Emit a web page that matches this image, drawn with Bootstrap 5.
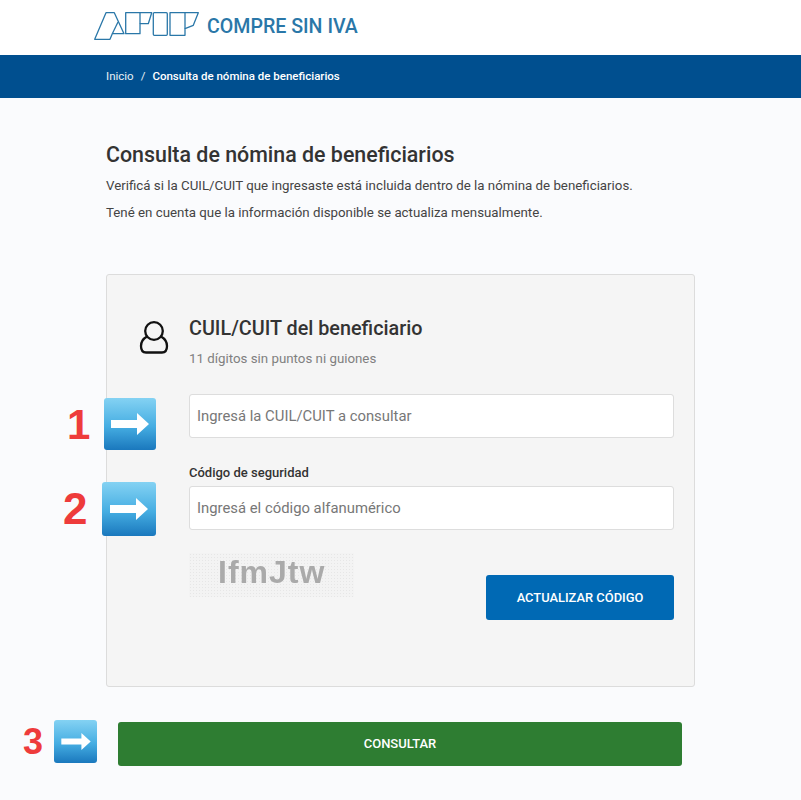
<!DOCTYPE html>
<html lang="es">
<head>
    <meta charset="utf-8">
    <meta name="viewport" content="width=device-width, initial-scale=1">
    <title>Consulta de nómina de beneficiarios</title>
    <link href="https://cdn.jsdelivr.net/npm/bootstrap@5.3.3/dist/css/bootstrap.min.css" rel="stylesheet">
    <style>
        body {
            background-color: #fafbfd;
            font-family: Roboto, "Liberation Sans", sans-serif;
            color: #333;
            height: 800px;
            overflow: hidden;
        }
        .top-head {
            height: 55px;
            background-color: #fff;
            padding-left: 94px;
        }
        .logo-svg { margin-top: -3px; }
        .head-title {
            color: #2a77a8;
            font-size: 19.6px;
            font-weight: 500;
            margin-left: 8px;
            margin-top: -1px;
        }
        .crumb-bar {
            height: 43px;
            background-color: #004f8f;
            padding-left: 106px;
            font-size: 11.5px;
            color: #e8eff5;
        }
        .crumb-bar .sep { margin: 0 7px; }
        .crumb-bar strong { font-weight: 500; color: #fff; }
        .page-body {
            position: relative;
            padding: 44px 106px 0 106px;
        }
        .page-title {
            font-size: 21.4px;
            font-weight: 500;
            line-height: 26px;
            margin: 0 0 8px 0;
            color: #333;
        }
        .page-text {
            font-size: 13.3px;
            line-height: 19px;
            margin: 0 0 8px 0;
            color: #444;
        }
        .form-box {
            margin-top: 52px;
            height: 413px;
            background-color: #f5f5f5;
            border: 1px solid #dcdcdc;
            border-radius: 3px;
            padding: 43px 20px 0 32px;
        }
        .user-ico { margin-top: 3px; }
        .box-head { margin-left: 20px; }
        .box-title {
            font-size: 19.8px;
            font-weight: 500;
            line-height: 22px;
            color: #333;
        }
        .box-sub {
            font-size: 13.3px;
            color: #808080;
            line-height: 16px;
            margin-top: 11px;
        }
        .field-wrap { padding-left: 50px; }
        .form-control.field-input {
            height: 44px;
            border: 1px solid #ddd;
            border-radius: 3px;
            font-size: 14.85px;
            padding-left: 7px;
            background-color: #fff;
        }
        .field-input::placeholder { color: #777; opacity: 1; }
        .first-input { margin-top: 27px; }
        .field-label {
            font-size: 13px;
            font-weight: 500;
            color: #333;
            line-height: 14px;
            margin: 28px 0 6px 0;
        }
        .captcha-img {
            width: 165px;
            height: 44px;
            margin-top: 23px;
            background-color: #f3f3f3;
            background-image: radial-gradient(#e6e6e6 0.7px, transparent 0.8px);
            background-size: 3px 3px;
            font-family: "Liberation Sans", sans-serif;
            font-weight: 700;
            font-size: 32px;
            letter-spacing: 1px;
            line-height: 38px;
            color: #aaa;
            padding-left: 29px;
            filter: blur(0.6px);
        }
        .btn.btn-refresh {
            width: 188px;
            height: 45px;
            margin-top: 45px;
            background-color: #0069b4;
            border: 0;
            border-radius: 3px;
            color: #fff;
            font-size: 12.9px;
            font-weight: 500;
        }
        .btn.btn-query {
            display: block;
            width: 564px;
            height: 44px;
            margin: 35px 0 0 12px;
            background-color: #2e7d32;
            border: 0;
            border-radius: 3px;
            color: #fff;
            font-size: 13px;
            font-weight: 500;
        }
        /* flechas y numeros pegados encima de la captura */
        .step-num {
            position: absolute;
            font-family: "Liberation Sans", sans-serif;
            font-weight: 700;
            color: #ee3b3b;
            font-size: 44px;
            line-height: 44px;
        }
        .step-arrow {
            position: absolute;
            background: linear-gradient(#84d2f3, #45ade2 55%, #1a78bd);
            border-radius: 3px;
            display: flex;
            align-items: center;
            justify-content: center;
        }
    </style>
</head>
<body>
    <header class="top-head d-flex align-items-center">
        <svg class="logo-svg" width="105" height="28" viewBox="0 0 105 28" fill="none" stroke="#2a77a8" stroke-width="1.3" stroke-linejoin="round">
            <path d="M0.700 27.300 L12 0.700 H20.300 L30 21.700 H18.300 L16 27.300 Z"/>
            <path d="M18.300 21.700 L24 10"/>
            <path d="M31.700 0.700 H57.700 L54.300 11.700 H46 V21.700 H31.700 Z"/>
            <path d="M46 0.700 V11.700"/>
            <rect x="59.300" y="0.700" width="14" height="22.600" rx="1"/>
            <path d="M76 0.700 H104.300 L99.300 13.300 L91 16.700 V23.300 H76 Z"/>
            <path d="M91 0.700 V16.700"/>
        </svg>
        <span class="head-title">COMPRE SIN IVA</span>
    </header>

    <nav class="crumb-bar d-flex align-items-center">
        <span>Inicio</span><span class="sep">/</span><strong>Consulta de nómina de beneficiarios</strong>
    </nav>

    <main class="page-body">
        <h1 class="page-title">Consulta de nómina de beneficiarios</h1>
        <p class="page-text">Verificá si la CUIL/CUIT que ingresaste está incluida dentro de la nómina de beneficiarios.</p>
        <p class="page-text">Tené en cuenta que la información disponible se actualiza mensualmente.</p>

        <div class="form-box">
            <div class="d-flex align-items-start">
                <svg class="user-ico" width="30" height="33" viewBox="0 0 30 33" fill="none" stroke="#111" stroke-width="2.3">
                    <circle cx="15" cy="10" r="8.800"/>
                    <path d="M8 15.500 C3.500 18 2 21 2 25 C2 29 4 31.500 7 31.500 H23 C26 31.500 28 29 28 25 C28 21 26.500 18 22 15.500"/>
                </svg>
                <div class="box-head">
                    <div class="box-title">CUIL/CUIT del beneficiario</div>
                    <div class="box-sub">11 dígitos sin puntos ni guiones</div>
                </div>
            </div>

            <div class="field-wrap">
                <input type="text" class="form-control field-input first-input" placeholder="Ingresá la CUIL/CUIT a consultar">
                <p class="field-label">Código de seguridad</p>
                <input type="text" class="form-control field-input" placeholder="Ingresá el código alfanumérico">
                <div class="d-flex justify-content-between align-items-start">
                    <div class="captcha-img">IfmJtw</div>
                    <button type="button" class="btn btn-refresh">ACTUALIZAR CÓDIGO</button>
                </div>
            </div>
        </div>

        <button type="button" class="btn btn-query">CONSULTAR</button>
    </main>

    <span class="step-num" style="left:67px;top:404px;font-size:42px;line-height:42px">1</span>
    <div class="step-arrow" style="left:104px;top:398px;width:52px;height:52px">
        <svg width="38" height="22" viewBox="0 0 38 22" fill="#fff"><path d="M0 7 H26 V0 L38 11 L26 22 V15 H0 Z"/></svg>
    </div>
    <span class="step-num" style="left:63px;top:487px">2</span>
    <div class="step-arrow" style="left:102px;top:482px;width:54px;height:54px">
        <svg width="38" height="22" viewBox="0 0 38 22" fill="#fff"><path d="M0 7 H26 V0 L38 11 L26 22 V15 H0 Z"/></svg>
    </div>
    <span class="step-num" style="left:23px;top:724px;font-size:36px;line-height:36px">3</span>
    <div class="step-arrow" style="left:54px;top:720px;width:43px;height:43px">
        <svg width="30" height="17" viewBox="0 0 38 22" fill="#fff"><path d="M0 7 H26 V0 L38 11 L26 22 V15 H0 Z"/></svg>
    </div>

    <script src="https://cdn.jsdelivr.net/npm/bootstrap@5.3.3/dist/js/bootstrap.bundle.min.js"></script>
</body>
</html>
